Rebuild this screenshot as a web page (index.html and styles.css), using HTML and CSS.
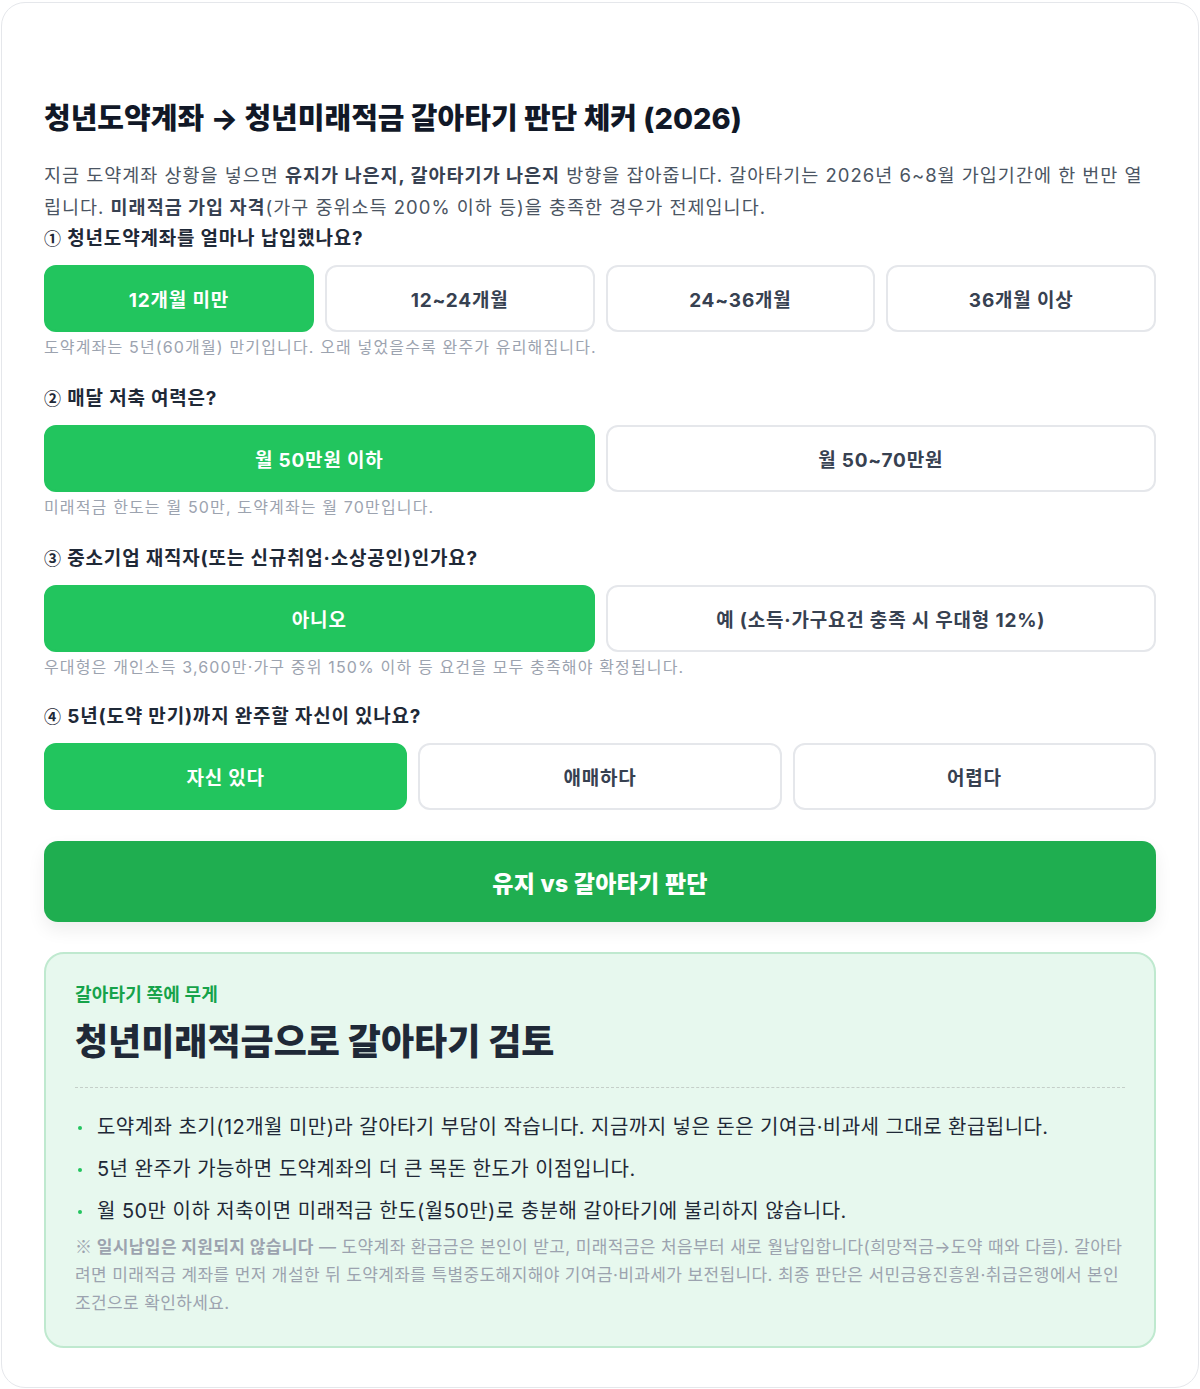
FILE: index.html
```html
<!DOCTYPE html>
<html lang="ko">

<head>
    <meta charset="UTF-8">
    <meta name="viewport" content="width=device-width, initial-scale=1.0">
    <title>청년도약계좌 → 청년미래적금 갈아타기 판단 체커</title>
    <link rel="stylesheet" href="styles.css">
</head>

<body>
    <div class="card">
        <h1 class="title">청년도약계좌 → 청년미래적금 갈아타기 판단 체커 (2026)</h1>
        <p class="desc">지금 도약계좌 상황을 넣으면 <b>유지가 나은지, 갈아타기가 나은지</b> 방향을 잡아줍니다. 갈아타기는 2026년 6~8월 가입기간에 한 번만 열립니다. <b>미래적금 가입 자격</b>(가구 중위소득 200% 이하 등)을 충족한 경우가 전제입니다.</p>

        <div class="question">
            <div class="q-label"><span class="num">①</span> 청년도약계좌를 얼마나 납입했나요?</div>
            <div class="options cols-4">
                <button class="opt active">12개월 미만</button>
                <button class="opt">12~24개월</button>
                <button class="opt">24~36개월</button>
                <button class="opt">36개월 이상</button>
            </div>
            <div class="hint">도약계좌는 5년(60개월) 만기입니다. 오래 넣었을수록 완주가 유리해집니다.</div>
        </div>

        <div class="question">
            <div class="q-label"><span class="num">②</span> 매달 저축 여력은?</div>
            <div class="options cols-2">
                <button class="opt active">월 50만원 이하</button>
                <button class="opt">월 50~70만원</button>
            </div>
            <div class="hint">미래적금 한도는 월 50만, 도약계좌는 월 70만입니다.</div>
        </div>

        <div class="question">
            <div class="q-label"><span class="num">③</span> 중소기업 재직자(또는 신규취업·소상공인)인가요?</div>
            <div class="options cols-2">
                <button class="opt active">아니오</button>
                <button class="opt">예 (소득·가구요건 충족 시 우대형 12%)</button>
            </div>
            <div class="hint">우대형은 개인소득 3,600만·가구 중위 150% 이하 등 요건을 모두 충족해야 확정됩니다.</div>
        </div>

        <div class="question last">
            <div class="q-label"><span class="num">④</span> 5년(도약 만기)까지 완주할 자신이 있나요?</div>
            <div class="options cols-3">
                <button class="opt active">자신 있다</button>
                <button class="opt">애매하다</button>
                <button class="opt">어렵다</button>
            </div>
        </div>

        <button class="submit">유지 vs 갈아타기 판단</button>

        <div class="result">
            <div class="result-tag">갈아타기 쪽에 무게</div>
            <h2 class="result-title">청년미래적금으로 갈아타기 검토</h2>
            <ul class="reasons">
                <li>도약계좌 초기(12개월 미만)라 갈아타기 부담이 작습니다. 지금까지 넣은 돈은 기여금·비과세 그대로 환급됩니다.</li>
                <li>5년 완주가 가능하면 도약계좌의 더 큰 목돈 한도가 이점입니다.</li>
                <li>월 50만 이하 저축이면 미래적금 한도(월50만)로 충분해 갈아타기에 불리하지 않습니다.</li>
            </ul>
            <p class="note"><b><span class="mark">※</span> 일시납입은 지원되지 않습니다</b> — 도약계좌 환급금은 본인이 받고, 미래적금은 처음부터 새로 월납입합니다(희망적금→도약 때와 다름). 갈아타려면 미래적금 계좌를 먼저 개설한 뒤 도약계좌를 특별중도해지해야 기여금·비과세가 보전됩니다. 최종 판단은 서민금융진흥원·취급은행에서 본인 조건으로 확인하세요.</p>
        </div>
    </div>
</body>

</html>
```

FILE: styles.css
```css
* {
    margin: 0;
    padding: 0;
    box-sizing: border-box;
}

body {
    padding: 2px 1px 2px 1px;
    background-color: #fff;
    font-family: Inter, "Noto Sans CJK KR", sans-serif;
    color: #1f2937;
}

.card {
    border: 1px solid #e5e7eb;
    border-radius: 24px;
    padding: 98px 42px 39px;
    background-color: #fff;
}

.title {
    font-size: 29px;
    line-height: 36px;
    font-weight: 800;
    color: #111827;
    margin-bottom: 22px;
}

.desc {
    font-size: 18.5px;
    line-height: 32px;
    color: #4b5563;
    letter-spacing: 1px;
    margin-bottom: 3px;
}

.desc b {
    color: #374151;
    font-weight: 700;
}

.question {
    margin-bottom: 27px;
}

.question.last {
    margin-top: -2px;
    margin-bottom: 31px;
}

.q-label {
    font-size: 19px;
    line-height: 24px;
    font-weight: 700;
    color: #1f2937;
    letter-spacing: 0.8px;
    margin-bottom: 14px;
}

.q-label .num {
    font-family: "Noto Sans CJK KR", sans-serif;
    font-size: 17px;
    letter-spacing: 0;
    margin-right: 1px;
}

.options {
    display: grid;
    gap: 11px;
}

.cols-4 {
    grid-template-columns: repeat(4, 1fr);
}

.cols-3 {
    grid-template-columns: repeat(3, 1fr);
}

.cols-2 {
    grid-template-columns: repeat(2, 1fr);
}

.opt {
    height: 67px;
    border: 2px solid #e5e7eb;
    border-radius: 12px;
    background-color: #fff;
    font-family: inherit;
    font-size: 19px;
    font-weight: 700;
    color: #374151;
    letter-spacing: 0.8px;
    cursor: pointer;
}

.opt.active {
    background-color: #22c55e;
    border-color: #22c55e;
    color: #fff;
}

.hint {
    margin-top: 3px;
    font-size: 16px;
    line-height: 24px;
    color: #9ca3af;
    letter-spacing: 1.15px;
}

.submit {
    display: block;
    width: 100%;
    height: 81px;
    border: none;
    border-radius: 14px;
    background-color: #1fae50;
    color: #fff;
    font-family: inherit;
    font-size: 23px;
    font-weight: 800;
    letter-spacing: 0.3px;
    box-shadow: 0 8px 18px rgba(0, 0, 0, 0.07);
    cursor: pointer;
}

.result {
    margin-top: 30px;
    border: 2px solid #bfe9cf;
    border-radius: 20px;
    background-color: #e7f8ee;
    padding: 29px 29px 29px;
}

.result-tag {
    font-size: 18px;
    line-height: 24px;
    font-weight: 700;
    color: #16a34a;
    letter-spacing: 0.2px;
    margin-bottom: 13px;
}

.result-title {
    font-size: 36px;
    line-height: 44px;
    font-weight: 800;
    color: #1f2937;
    padding-bottom: 23px;
    border-bottom: 1px dashed #c5cfc9;
    margin-bottom: 24px;
}

.reasons {
    list-style: none;
}

.reasons li {
    position: relative;
    padding-left: 22px;
    font-size: 20px;
    line-height: 30px;
    color: #1f2937;
    letter-spacing: 0.45px;
    margin-bottom: 12px;
}

.reasons li::before {
    content: "";
    position: absolute;
    left: 3px;
    top: 14px;
    width: 4px;
    height: 4px;
    border-radius: 50%;
    background-color: #22c55e;
}

.reasons li:last-child {
    margin-bottom: 6px;
}

.note {
    font-size: 17px;
    line-height: 28px;
    color: #9ca3af;
    letter-spacing: 0.38px;
}

.note b {
    font-weight: 700;
}

.note .mark {
    font-family: "Noto Sans CJK KR", sans-serif;
}
```
